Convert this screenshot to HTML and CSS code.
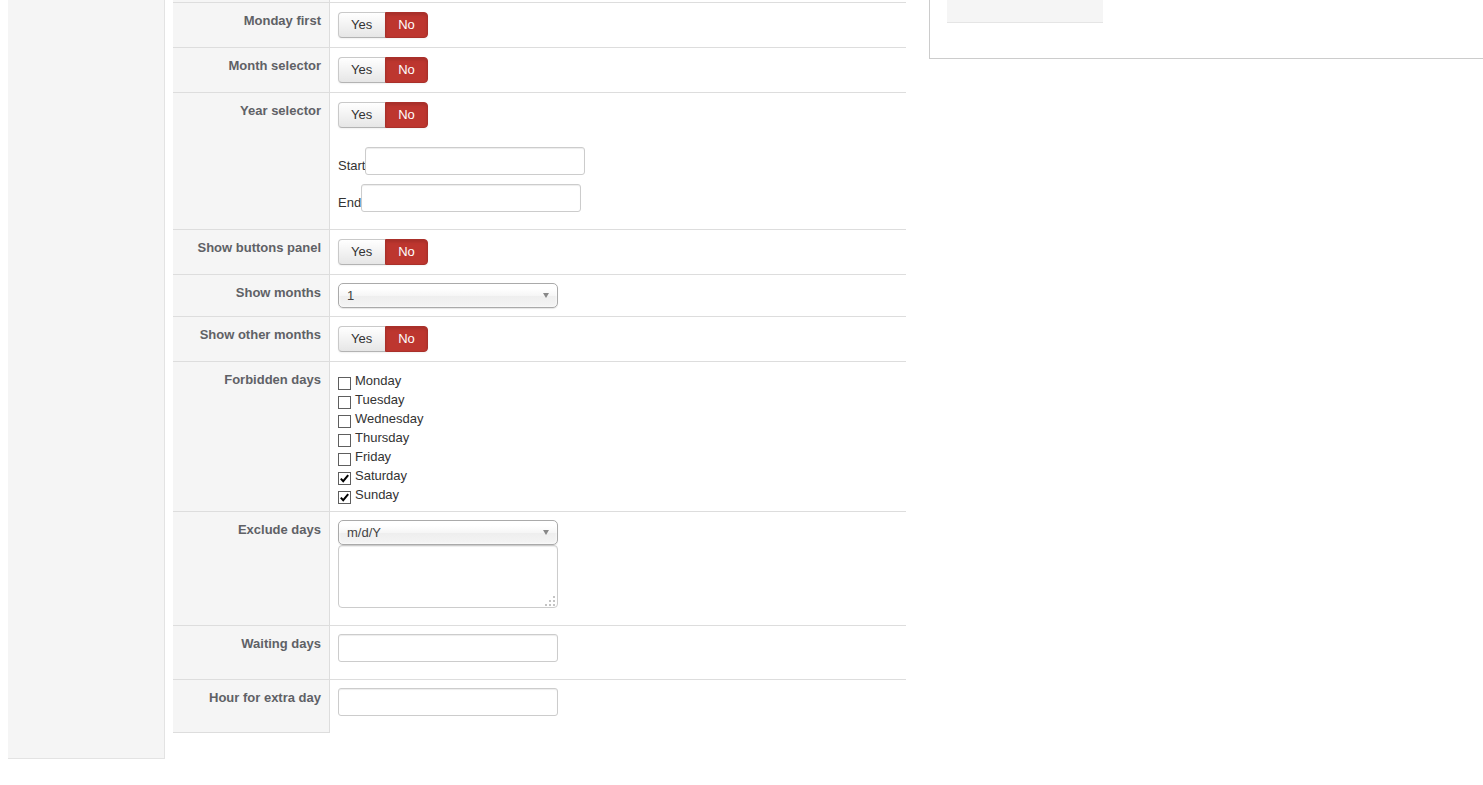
FILE: index.html
```html
<!DOCTYPE html>
<html>
<head>
<meta charset="utf-8">
<title>Calendar options</title>
<link rel="stylesheet" href="styles.css">
</head>
<body>
<div class="page">
  <aside class="sidebar"></aside>

  <div class="form">
    <div class="row row-top">
      <div class="label"></div>
      <div class="field"></div>
    </div>

    <div class="row">
      <div class="label">Monday first</div>
      <div class="field">
        <div class="toggle"><span class="btn yes">Yes</span><span class="btn no">No</span></div>
      </div>
    </div>

    <div class="row">
      <div class="label">Month selector</div>
      <div class="field">
        <div class="toggle"><span class="btn yes">Yes</span><span class="btn no">No</span></div>
      </div>
    </div>

    <div class="row">
      <div class="label">Year selector</div>
      <div class="field">
        <div class="toggle"><span class="btn yes">Yes</span><span class="btn no">No</span></div>
        <div class="range">
          <div class="range-line"><span class="range-label">Start</span><input class="text" type="text"></div>
          <div class="range-line"><span class="range-label">End</span><input class="text" type="text"></div>
        </div>
      </div>
    </div>

    <div class="row">
      <div class="label">Show buttons panel</div>
      <div class="field">
        <div class="toggle"><span class="btn yes">Yes</span><span class="btn no">No</span></div>
      </div>
    </div>

    <div class="row">
      <div class="label">Show months</div>
      <div class="field">
        <div class="select"><span class="select-value">1</span><span class="arrow"></span></div>
      </div>
    </div>

    <div class="row">
      <div class="label">Show other months</div>
      <div class="field">
        <div class="toggle"><span class="btn yes">Yes</span><span class="btn no">No</span></div>
      </div>
    </div>

    <div class="row">
      <div class="label">Forbidden days</div>
      <div class="field">
        <ul class="days">
          <li><span class="box"></span>Monday</li>
          <li><span class="box"></span>Tuesday</li>
          <li><span class="box"></span>Wednesday</li>
          <li><span class="box"></span>Thursday</li>
          <li><span class="box"></span>Friday</li>
          <li><span class="box"><svg viewBox="0 0 11 11" width="11" height="11"><path d="M1.8 5.6 L4.2 8.2 L9.2 2.2" fill="none" stroke="#000" stroke-width="2"/></svg></span>Saturday</li>
          <li><span class="box"><svg viewBox="0 0 11 11" width="11" height="11"><path d="M1.8 5.6 L4.2 8.2 L9.2 2.2" fill="none" stroke="#000" stroke-width="2"/></svg></span>Sunday</li>
        </ul>
      </div>
    </div>

    <div class="row">
      <div class="label">Exclude days</div>
      <div class="field">
        <div class="select"><span class="select-value">m/d/Y</span><span class="arrow"></span></div>
        <div class="area-wrap">
          <textarea class="area"></textarea>
          <svg class="grip" viewBox="0 0 12 11" width="12" height="11">
            <rect x="9" y="1" width="2" height="2" fill="#c4c4c4"/>
            <rect x="5" y="5" width="2" height="2" fill="#c4c4c4"/>
            <rect x="9" y="5" width="2" height="2" fill="#c4c4c4"/>
            <rect x="1" y="9" width="2" height="2" fill="#c4c4c4"/>
            <rect x="5" y="9" width="2" height="2" fill="#c4c4c4"/>
            <rect x="9" y="9" width="2" height="2" fill="#c4c4c4"/>
          </svg>
        </div>
      </div>
    </div>

    <div class="row">
      <div class="label">Waiting days</div>
      <div class="field">
        <input class="text" type="text">
      </div>
    </div>

    <div class="row row-last">
      <div class="label">Hour for extra day</div>
      <div class="field">
        <input class="text" type="text">
      </div>
    </div>
  </div>

  <div class="panel">
    <div class="panel-box"></div>
  </div>
</div>
</body>
</html>
```

FILE: styles.css
```css
html, body {
  margin: 0;
  padding: 0;
  background: #fff;
  overflow: hidden;
}

body {
  font-family: "Liberation Sans", Arial, Helvetica, sans-serif;
  font-size: 13px;
  line-height: 18px;
  color: #333;
}

.page {
  display: flex;
  align-items: flex-start;
  width: 1483px;
  height: 785px;
}

.sidebar {
  flex: none;
  margin-left: 8px;
  width: 156px;
  height: 758px;
  background: #f5f5f5;
  border-right: 1px solid #e3e3e3;
  border-bottom: 1px solid #e3e3e3;
}

.form {
  flex: none;
  margin-left: 8px;
  width: 733px;
}

.row {
  display: grid;
  grid-template-columns: 157px 1fr;
  border-top: 1px solid #ddd;
}

.row-top {
  border-top: 0;
  height: 2px;
}

.label {
  box-sizing: border-box;
  background: #f5f5f5;
  border-right: 1px solid #ddd;
  padding: 9px 8px 0 0;
  text-align: right;
  font-weight: bold;
  color: #5f6166;
  line-height: 18px;
}

.row-last .label {
  border-bottom: 1px solid #ddd;
}

.field {
  padding: 8px 0 8px 8px;
  min-width: 0;
}

.row-top .field,
.row-top .label {
  padding: 0;
}

/* Yes / No toggle */
.toggle {
  display: inline-flex;
  margin: 1px 0;
  vertical-align: top;
}

.btn {
  display: block;
  padding: 3px 12px;
  line-height: 18px;
  font-size: 13px;
  border: 1px solid #ccc;
}

.yes {
  color: #333;
  padding: 3px 13px 3px 12px;
  background: linear-gradient(#ffffff, #e6e6e6);
  border-color: #c9c9c9 #c9c9c9 #b3b3b3;
  border-right: 0;
  border-radius: 4px 0 0 4px;
  box-shadow: inset 0 1px 0 rgba(255,255,255,.3), 0 1px 2px rgba(0,0,0,.06);
}

.no {
  color: #fff;
  padding: 3px 12px 3px 12px;
  background: #bd362f;
  border-color: #a9302a;
  border-radius: 0 4px 4px 0;
  box-shadow: inset 0 2px 3px rgba(0,0,0,.12), 0 1px 2px rgba(0,0,0,.05);
}

/* Year range */
.range {
  margin-top: 18px;
}

.range-line {
  display: flex;
  align-items: flex-end;
  margin-bottom: 9px;
}

.range-label {
  color: #333;
  line-height: 18px;
}

/* text inputs */
.text {
  box-sizing: border-box;
  display: block;
  width: 220px;
  height: 28px;
  margin: 0;
  padding: 4px 6px;
  font: inherit;
  border: 1px solid #ccc;
  border-radius: 3px;
  background: #fff;
  box-shadow: inset 0 1px 1px rgba(0,0,0,.075);
}

.field > .text {
  margin-bottom: 9px;
}

.range-line .text {
  margin: 0;
}

/* chosen-like select */
.select {
  box-sizing: border-box;
  position: relative;
  width: 220px;
  height: 25px;
  border: 1px solid #aaa;
  border-radius: 5px;
  background: linear-gradient(#ffffff 20%, #f6f6f6 50%, #eeeeee 52%, #f4f4f4 100%);
  box-shadow: inset 0 0 3px #fff, 0 1px 1px rgba(0,0,0,.1);
  color: #444;
  line-height: 24px;
  padding-left: 8px;
}

.select-value {
  display: block;
  line-height: 24px;
}

.arrow {
  position: absolute;
  right: 8px;
  top: 9px;
  width: 0;
  height: 0;
  border-left: 3.5px solid transparent;
  border-right: 3.5px solid transparent;
  border-top: 5px solid #888;
}

/* textarea */
.area-wrap {
  position: relative;
  width: 220px;
  height: 63px;
  margin-bottom: 9px;
}

.area {
  box-sizing: border-box;
  display: block;
  width: 220px;
  height: 63px;
  margin: 0;
  padding: 4px 6px;
  font: inherit;
  resize: none;
  border: 1px solid #ccc;
  border-radius: 4px;
  box-shadow: inset 0 1px 1px rgba(0,0,0,.075);
}

.grip {
  position: absolute;
  right: 2px;
  bottom: 2px;
}

/* checkbox list */
.days {
  list-style: none;
  margin: 1px 0 -1px;
  padding: 0;
}

.days li {
  display: flex;
  align-items: flex-start;
  height: 19px;
  line-height: 19px;
  color: #333;
}

.box {
  box-sizing: border-box;
  flex: none;
  display: flex;
  align-items: center;
  justify-content: center;
  width: 13px;
  height: 13px;
  margin: 6px 4px 0 0;
  border: 1px solid #5e5e5e;
  background: #fff;
}

.box svg {
  display: block;
}

/* right panel */
.panel {
  flex: none;
  margin-left: 23px;
  width: 600px;
  height: 58px;
  border-left: 1px solid #ccc;
  border-bottom: 1px solid #ccc;
}

.panel-box {
  margin-left: 17px;
  width: 156px;
  height: 22px;
  background: #f5f5f5;
  border-bottom: 1px solid #e5e5e5;
}
```
